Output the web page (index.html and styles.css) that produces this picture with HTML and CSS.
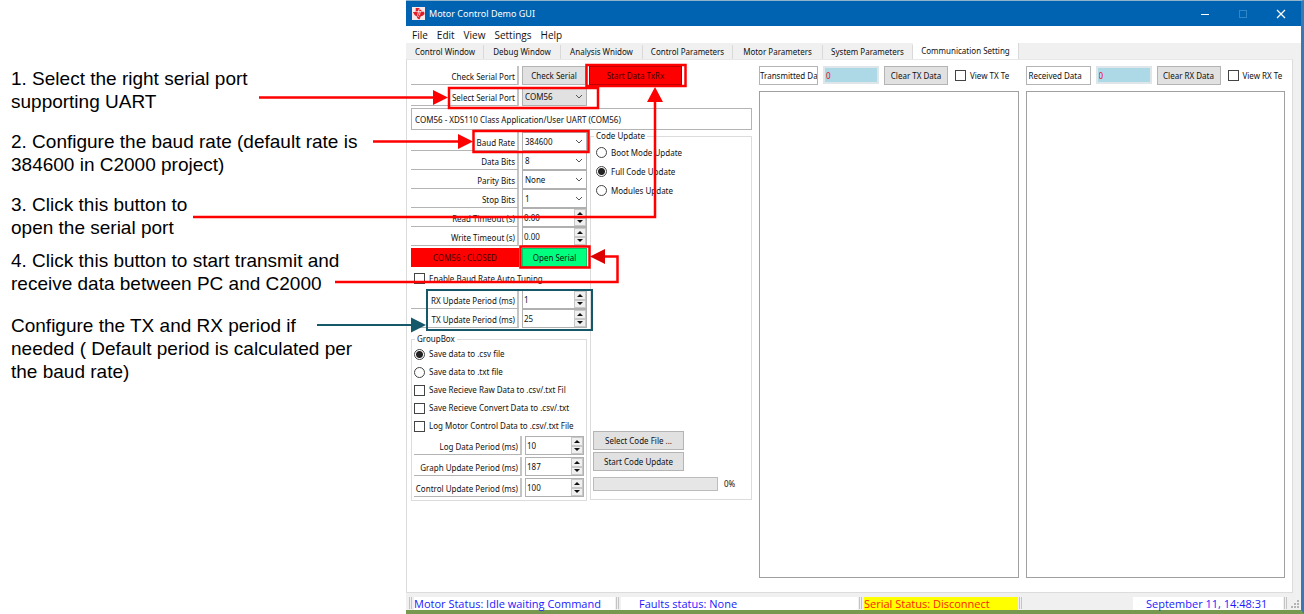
FILE: index.html
```html
<!DOCTYPE html>
<html lang="en">
<head>
<meta charset="utf-8">
<title>Motor Control Demo GUI</title>
<link rel="stylesheet" href="styles.css">
</head>
<body>
<main class="page">
  <section class="notes">
    <p class="note">1. Select the right serial port<br>supporting UART</p>
    <p class="note">2. Configure the baud rate (default rate is<br>384600 in C2000 project)</p>
    <p class="note note-tight">3. Click this button to<br>open the serial port</p>
    <p class="note note-last">4. Click this button to start transmit and<br>receive data between PC and C2000</p>
    <p class="note">Configure the TX and RX period if<br>needed ( Default period is calculated per<br>the baud rate)</p>
  </section>

  <section class="window">
    <header class="titlebar">
      <svg class="logo" viewBox="0 0 14 14" aria-hidden="true"><rect width="14" height="14" fill="#f7e9ea"/><path d="M4 1h4v2h2v2h3l.5 2.500-2 2-2 .5-1.500 3.500-2-1-1-2.500-2-1-2-3.500h3z" fill="#e01b24"/><path d="M7.500 2.500L6 9.500l1.500 1.500M4.500 5h5M9 4.500L8 9" stroke="#fff" stroke-width=".8" fill="none"/></svg>
      <h1 class="title">Motor Control Demo GUI</h1>
      <div class="winbtns">
        <button class="winbtn" aria-label="Minimize"><svg viewBox="0 0 10 10"><path d="M1 5.500h8" stroke="#fff"/></svg></button>
        <button class="winbtn" aria-label="Maximize" disabled><svg viewBox="0 0 10 10"><rect x="1.500" y="1.500" width="7" height="7" fill="none" stroke="#2f86c8"/></svg></button>
        <button class="winbtn" aria-label="Close"><svg viewBox="0 0 10 10"><path d="M1 1l8 8M9 1l-8 8" stroke="#fff" stroke-width="1.200"/></svg></button>
      </div>
    </header>
    <nav class="menubar">
      <button>File</button><button>Edit</button><button>View</button><button>Settings</button><button>Help</button>
    </nav>
    <div class="client">
      <div class="tabs" role="tablist">
        <button class="tab tab-s" role="tab">Control Window</button>
        <button class="tab tab-s" role="tab">Debug Window</button>
        <button class="tab tab-m" role="tab">Analysis Wnidow</button>
        <button class="tab tab-l" role="tab">Control Parameters</button>
        <button class="tab tab-l" role="tab">Motor Parameters</button>
        <button class="tab tab-l" role="tab">System Parameters</button>
        <button class="tab tab-active" role="tab" aria-selected="true">Communication Setting</button>
      </div>
      <div class="panel">
        <div class="settings">
          <div class="row">
            <span class="lbl">Check Serial Port</span>
            <button class="btn w64">Check Serial</button>
            <button class="btn start">Start Data TxRx</button>
          </div>
          <div class="row row-port">
            <label class="lbl" for="port">Select Serial Port</label>
            <span class="combo combo-gray"><select id="port"><option>COM56</option></select><svg class="chev" viewBox="0 0 8 5"><path d="M1 1l3 3 3-3"/></svg></span>
          </div>
          <input class="portinfo" aria-label="Port description" value="COM56 - XDS110 Class Application/User UART (COM56)">
          <div class="columns">
            <div class="left">
              <div class="row"><label class="lbl" for="baud">Baud Rate</label><span class="combo"><select id="baud"><option>384600</option></select><svg class="chev" viewBox="0 0 8 5"><path d="M1 1l3 3 3-3"/></svg></span></div>
              <div class="row"><label class="lbl" for="dbits">Data Bits</label><span class="combo"><select id="dbits"><option>8</option></select><svg class="chev" viewBox="0 0 8 5"><path d="M1 1l3 3 3-3"/></svg></span></div>
              <div class="row"><label class="lbl" for="parity">Parity Bits</label><span class="combo"><select id="parity"><option>None</option></select><svg class="chev" viewBox="0 0 8 5"><path d="M1 1l3 3 3-3"/></svg></span></div>
              <div class="row"><label class="lbl" for="sbits">Stop Bits</label><span class="combo"><select id="sbits"><option>1</option></select><svg class="chev" viewBox="0 0 8 5"><path d="M1 1l3 3 3-3"/></svg></span></div>
              <div class="row"><label class="lbl" for="rto">Read Timeout (s)</label><span class="spin"><input id="rto" value="0.00"><span class="arrows"><button class="up" aria-label="Increase"></button><button class="down" aria-label="Decrease"></button></span></span></div>
              <div class="row"><label class="lbl" for="wto">Write Timeout (s)</label><span class="spin"><input id="wto" value="0.00"><span class="arrows"><button class="up" aria-label="Increase"></button><button class="down" aria-label="Decrease"></button></span></span></div>
              <div class="row row-state"><span class="closed">COM56 : CLOSED</span><button class="btn open">Open Serial</button></div>
              <label class="check auto"><input type="checkbox"><span>Enable Baud Rate Auto Tuning</span></label>
              <div class="row"><label class="lbl" for="rxp">RX Update Period (ms)</label><span class="spin"><input id="rxp" value="1"><span class="arrows"><button class="up" aria-label="Increase"></button><button class="down" aria-label="Decrease"></button></span></span></div>
              <div class="row"><label class="lbl" for="txp">TX Update Period (ms)</label><span class="spin"><input id="txp" value="25"><span class="arrows"><button class="up" aria-label="Increase"></button><button class="down" aria-label="Decrease"></button></span></span></div>
              <fieldset class="group save">
                <legend>GroupBox</legend>
                <label class="check"><input type="radio" name="fmt" checked><span>Save data to .csv file</span></label>
                <label class="check"><input type="radio" name="fmt"><span>Save data to .txt file</span></label>
                <label class="check"><input type="checkbox"><span>Save Recieve Raw Data to .csv/.txt Fil</span></label>
                <label class="check"><input type="checkbox"><span>Save Recieve Convert Data to .csv/.txt</span></label>
                <label class="check"><input type="checkbox"><span>Log Motor Control Data to .csv/.txt File</span></label>
                <div class="periods">
                  <div class="row"><label class="lbl" for="logp">Log Data Period (ms)</label><span class="spin"><input id="logp" value="10"><span class="arrows"><button class="up" aria-label="Increase"></button><button class="down" aria-label="Decrease"></button></span></span></div>
                  <div class="row"><label class="lbl" for="grp">Graph Update Period (ms)</label><span class="spin"><input id="grp" value="187"><span class="arrows"><button class="up" aria-label="Increase"></button><button class="down" aria-label="Decrease"></button></span></span></div>
                  <div class="row"><label class="lbl" for="ctp">Control Update Period (ms)</label><span class="spin"><input id="ctp" value="100"><span class="arrows"><button class="up" aria-label="Increase"></button><button class="down" aria-label="Decrease"></button></span></span></div>
                </div>
              </fieldset>
            </div>
            <fieldset class="group code">
              <legend>Code Update</legend>
              <label class="check"><input type="radio" name="mode"><span>Boot Mode Update</span></label>
              <label class="check"><input type="radio" name="mode" checked><span>Full Code Update</span></label>
              <label class="check"><input type="radio" name="mode"><span>Modules Update</span></label>
              <div class="codebtns">
                <button class="btn">Select Code File ...</button>
                <button class="btn">Start Code Update</button>
              </div>
              <div class="progress"><div class="bar" role="progressbar" aria-label="Code update" aria-valuenow="0"></div><span>0%</span></div>
            </fieldset>
          </div>
        </div>
        <div class="stream">
          <div class="streambar">
            <input class="name" aria-label="Transmitted label" value="Transmitted Da">
            <input class="count" aria-label="Transmitted count" value="0">
            <button class="btn w64">Clear TX Data</button>
            <label class="check"><input type="checkbox"><span>View TX Te</span></label>
          </div>
          <textarea class="log" aria-label="Transmitted data"></textarea>
        </div>
        <div class="stream">
          <div class="streambar">
            <input class="name name-rx" aria-label="Received label" value="Received Data">
            <input class="count" aria-label="Received count" value="0">
            <button class="btn w64">Clear RX Data</button>
            <label class="check"><input type="checkbox"><span>View RX Te</span></label>
          </div>
          <textarea class="log" aria-label="Received data"></textarea>
        </div>
      </div>
    </div>
    <footer class="status">
      <i class="grip"></i><span class="cell motor">Motor Status: Idle waiting Command</span>
      <i class="grip"></i><span class="cell faults">Faults status: None</span>
      <i class="grip"></i><span class="cell serial">Serial Status: Disconnect</span>
      <i class="grip"></i><span class="fill"></span><span class="cell date">September 11, 14:48:31</span>
      <i class="grip"></i>
      <svg class="size" viewBox="0 0 9 9" aria-hidden="true"><path d="M6 0h2v2h-2zM3 3h2v2h-2zM6 3h2v2h-2zM0 6h2v2h-2zM3 6h2v2h-2zM6 6h2v2h-2z" fill="#b4b4b4"/></svg>
    </footer>
  </section>

  <svg class="callouts" width="1304" height="614" viewBox="0 0 1304 614" aria-hidden="true">
    <g fill="none" stroke="#f00" stroke-width="2.500">
      <rect x="449" y="88" width="149" height="20"/>
      <rect x="586.500" y="65" width="99" height="21"/>
      <rect x="473.500" y="131" width="115" height="21"/>
      <rect x="520.500" y="246.500" width="69" height="21"/>
      <path d="M259 97.500H435M373 141.500H460M193 217H655V100M335 282H617.500V256.500H603"/>
    </g>
    <path d="M433 90l15 7.500-15 7.500zM458 134l15 7.500-15 7.500zM647 102l8-15 8 15z" fill="#f00"/>
    <path d="M605 249l-15 7.500 15 7.500z" fill="#dd0000"/>
    <g fill="none" stroke="#14586a" stroke-width="2">
      <rect x="427" y="290" width="165" height="40"/>
      <path d="M317 325H413"/>
    </g>
    <path d="M411 317.500l15 7.500-15 7.500z" fill="#14586a"/>
  </svg>
</main>
</body>
</html>
```
FILE: styles.css
```css
* { box-sizing: border-box; }
body { margin: 0; background: #fff; color: #111; font: 8px/12px "Noto Sans", "Open Sans", sans-serif; }
button, input, select, textarea { font: inherit; color: inherit; margin: 0; padding: 0; border-radius: 0; }
.page { position: relative; display: flex; min-height: 100vh; }

.notes { flex: none; width: 406px; padding: 67px 0 0 11px; color: #000; font: 19px/23px "Liberation Sans", Arial, sans-serif; white-space: nowrap; }
.note { margin: 0 0 17px; }
.note-tight { margin-bottom: 10px; }
.note-last { margin-bottom: 19px; }

.window { flex: 1; min-width: 0; display: flex; flex-direction: column; background: #f0f0f0; border-top: 1px solid #8fb4cc; border-right: 3px solid #3a78b5; border-bottom: 4px solid #77994f; }
.titlebar { display: flex; align-items: center; height: 25px; padding: 0 15px 0 6px; gap: 4px; background: #0063b1; color: #fff; }
.logo { width: 13px; height: 13px; }
.title { margin: 0; font-size: 9px; font-weight: 400; }
.winbtns { display: flex; gap: 28px; margin-left: auto; }
.winbtn { display: flex; width: 10px; height: 10px; border: 0; background: none; }
.winbtn svg { width: 10px; height: 10px; }
.menubar { display: flex; gap: 9px; height: 17px; padding: 0 6px; background: #fff; font-family: "Open Sans", sans-serif; font-size: 10px; }
.menubar button { border: 0; background: none; }

.client { flex: 1; display: flex; flex-direction: column; padding: 0 8px 0 0; }
.tabs { display: flex; align-items: flex-end; height: 16px; padding-left: 1px; }
.tab { height: 14px; border: 0; border-right: 1px solid #d9d9d9; background: #f0f0f0; }
.tab-s { width: 77px; }
.tab-m { width: 82px; }
.tab-l { width: 90px; }
.tab-active { height: 16px; width: 106px; background: #fff; }
.panel { flex: 1; display: flex; gap: 7px; padding: 6px 7px 14px 4px; background: #fff; border: 1px solid #dcdcdc; border-top-color: #e8e8e8; }

.settings { flex: none; width: 341px; display: flex; flex-direction: column; }
.row { display: flex; gap: 3px; height: 19px; }
.lbl { width: 108px; padding: 5px 2px 0 0; border-right: 2px solid #c4c4c4; border-bottom: 1px solid #b4b4b4; text-align: right; white-space: nowrap; line-height: 12px; }
.btn { height: 19px; border: 1px solid #b4b4b4; background: #e1e1e1; white-space: nowrap; }
.w64 { width: 64px; }
.start { width: 93px; background: #f00; border-color: #b00000; color: #400000; }
.row-port { margin-top: 2px; }
.combo { position: relative; display: flex; width: 65px; height: 19px; background: #fff; border: 1px solid #b0b0b0; }
.combo-gray { background: #e1e1e1; }
.combo select { flex: 1; min-width: 0; appearance: none; border: 0; background: none; padding-left: 2px; }
.chev { position: absolute; right: 3px; top: 6px; width: 8px; height: 5px; fill: none; stroke: #555; pointer-events: none; }
.portinfo { height: 22px; margin-top: 2px; padding: 0 3px; border: 1px solid #b4b4b4; }
.columns { display: flex; gap: 3px; }
.left { width: 176px; padding-top: 2px; }
.spin { display: flex; width: 65px; height: 19px; border: 1px solid #b0b0b0; background: #fff; }
.spin input { flex: 1; min-width: 0; border: 0; padding-left: 1px; background: none; }
.arrows { display: flex; flex-direction: column; width: 12px; }
.arrows button { flex: 1; display: flex; align-items: center; justify-content: center; border: 1px solid #c8c8c8; background: #f0f0f0; }
.arrows button::before { content: ""; border: 3px solid transparent; }
.arrows .up::before { border-top: 0; border-bottom-color: #111; }
.arrows .down::before { border-bottom: 0; border-top-color: #111; }
.row-state { margin-top: 2px; }
.closed { width: 108px; background: #f00; color: #400000; text-align: center; line-height: 19px; }
.open { width: 65px; background: #00ff7f; border-color: #00c864; }

.check { display: flex; align-items: center; gap: 4px; white-space: nowrap; }
.check input { flex: none; appearance: none; width: 11px; height: 11px; border: 1px solid #444; background: #fff; }
.check input[type="radio"] { border-radius: 50%; }
.check input[type="radio"]:checked { background: radial-gradient(circle, #222 0 3px, #fff 4px); }
.auto { height: 23px; padding-left: 3px; }
.group { min-width: 0; margin: 0; border: 1px solid #dcdcdc; }
.group legend { padding: 0 2px; line-height: 12px; }
.save { margin-top: 5px; padding: 0 2px 3px; }
.save legend { margin-left: 1px; }
.save .check { height: 18px; }
.periods { display: grid; gap: 2px; margin-top: 1px; }
.periods .spin { width: 59px; }
.code { flex: 1; display: flex; flex-direction: column; height: 370px; padding: 1px 2px 8px; }
.code legend { margin-left: 1px; }
.code .check { height: 19px; padding-left: 3px; }
.codebtns { display: grid; gap: 2px; width: 91px; margin-top: auto; }
.progress { display: flex; align-items: center; gap: 6px; margin-top: 6px; }
.bar { width: 125px; height: 14px; border: 1px solid #bcbcbc; background: #e6e6e6; }

.stream { flex: 1; min-width: 0; display: flex; flex-direction: column; gap: 6px; }
.streambar { display: flex; gap: 5px; height: 19px; }
.name { width: 59px; padding: 0; border: 1px solid #b4b4b4; }
.name-rx { width: 65px; padding: 0 2px; }
.count { width: 56px; height: 18px; padding: 0 1px; border: 2px solid #dfe6e9; background: #add8e6; color: #f00028; }
.streambar .check { margin-left: 2px; }
.log { flex: 1; width: 100%; border: 1px solid #a0a0a0; background: #fff; resize: none; display: block; }

.status { display: flex; align-items: flex-start; height: 17px; padding: 4px 0 0 2px; color: #1a1aff; font-family: "Open Sans", sans-serif; font-size: 11px; line-height: 14px; white-space: nowrap; }
.grip { flex: none; width: 3px; height: 12px; margin: 0 2px 0 1px; border: solid #c4c4c4; border-width: 0 1px; }
.cell { height: 13px; background: #fff; }
.motor { width: 201px; }
.faults { width: 237px; padding-left: 18px; }
.serial { width: 154px; background: #ff0; color: #f20; }
.fill { flex: 1; }
.date { width: 150px; padding-left: 13px; }
.size { width: 9px; height: 9px; margin: 3px 1px 0 2px; }

.callouts { position: absolute; left: 0; top: 0; pointer-events: none; }
```
